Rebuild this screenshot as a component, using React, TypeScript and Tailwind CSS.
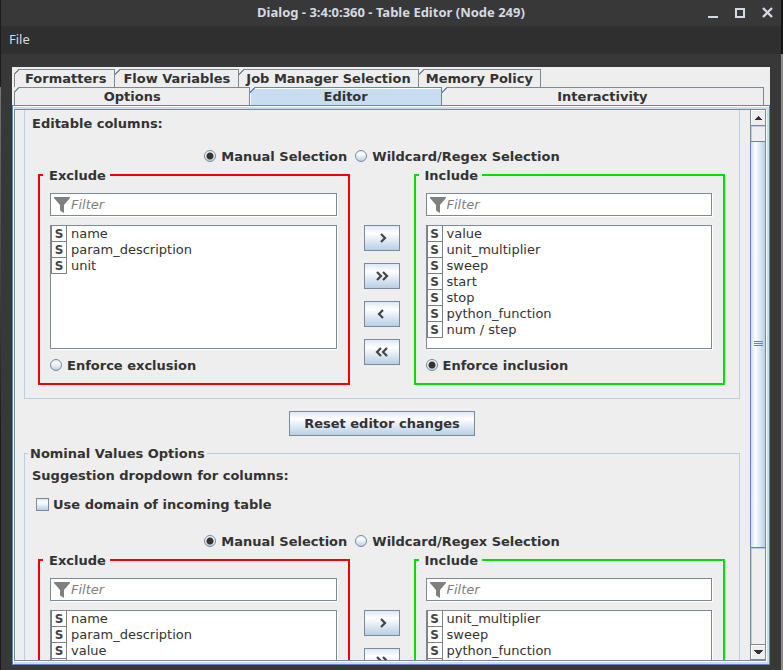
import { useRef } from 'react';
import clsx from 'clsx';

const INCLUDED = ['value', 'unit_multiplier', 'sweep', 'start', 'stop', 'python_function', 'num / step'];
const NOMINAL_INCLUDED = ['unit_multiplier', 'sweep', 'python_function', 'start'];

const BUTTON_FACE =
  'border border-[#7a8a99] bg-linear-to-b from-[#dde8f3] via-white via-30% to-[#b8cfe5]';

function TitleBar() {
  return (
    <header className="relative flex h-[26px] shrink-0 items-center justify-center bg-[#383838] text-[#d3dae3]">
      <h1 className="font-['Noto_Sans',sans-serif] text-[13px] font-bold">
        Dialog - 3:4:0:360 - Table Editor (Node 249)
      </h1>
      <div className="absolute right-2 flex gap-4">
        <button type="button" aria-label="Minimize">
          <svg width="11" height="12" shapeRendering="crispEdges">
            <path d="M0 9h10v2H0z" fill="currentColor" />
          </svg>
        </button>
        <button type="button" aria-label="Maximize">
          <svg width="11" height="12" shapeRendering="crispEdges">
            <path d="M1 2h8v8H1z" fill="none" stroke="currentColor" strokeWidth="2" />
          </svg>
        </button>
        <button type="button" aria-label="Close">
          <svg width="11" height="12">
            <path d="M1 1l9 9M10 1l-9 9" stroke="currentColor" strokeWidth="2.4" />
          </svg>
        </button>
      </div>
    </header>
  );
}

type TabProps = {
  label: string;
  className?: string;
  first?: boolean;
  selected?: boolean;
};

function Tab({ label, className, first, selected }: TabProps) {
  return (
    <button
      type="button"
      role="tab"
      aria-selected={!!selected}
      className={clsx(
        'relative h-[18px] border-t border-r text-center leading-[17px] whitespace-nowrap',
        first && 'border-l',
        selected ? 'border-[#6382bf] bg-[#c8ddf2] shadow-[inset_1px_1px_0_#fff]' : 'border-[#7a8a99]',
        className,
      )}
    >
      <svg
        className={clsx('absolute -top-px', first ? '-left-px' : 'left-0')}
        width="6"
        height="6"
        shapeRendering="crispEdges"
      >
        <path d="M0 0h6L0 6z" fill="#eee" />
        <path d="M0 5.5L5.5 0" stroke={selected ? '#6382bf' : '#7a8a99'} />
      </svg>
      {label}
    </button>
  );
}

function Tabs() {
  return (
    <div role="tablist" className="shrink-0 pt-[2px] pr-[6px] pl-[2px]">
      <div className="flex">
        <Tab label="Formatters" first className="pr-2 pl-[10px]" />
        <Tab label="Flow Variables" className="px-2" />
        <Tab label="Job Manager Selection" className="px-[7px]" />
        <Tab label="Memory Policy" className="px-[7px]" />
      </div>
      <div className="flex">
        <Tab label="Options" first className="flex-[235]" />
        <Tab label="Editor" selected className="flex-[191]" />
        <Tab label="Interactivity" className="flex-[322]" />
      </div>
    </div>
  );
}

type RadioProps = { name: string; label: string; checked?: boolean };

function Radio({ name, label, checked }: RadioProps) {
  return (
    <label className="flex h-4 items-center gap-[5px] leading-[18px]">
      <input
        type="radio"
        name={name}
        defaultChecked={checked}
        className="size-3 shrink-0 appearance-none rounded-full border border-[#7a8a99] bg-linear-to-b from-[#e4edf6] via-white via-30% to-[#b8cfe5] checked:bg-[radial-gradient(circle,#333_3px,transparent_4px),linear-gradient(#e4edf6,#fff_30%,#b8cfe5)]"
      />
      <span className="h-4">{label}</span>
    </label>
  );
}

function FilterBox({ label }: { label: string }) {
  return (
    <div className="mt-[10px] flex h-[23px] items-center border border-[#7a8a99] bg-white pl-[3px] shadow-[1px_1px_0_#fff]">
      <svg width="16" height="16" className="shrink-0">
        <path d="M0 0h16v1L10 8v8l-4-2.500V8L0 1z" fill="#808080" />
      </svg>
      <input
        type="text"
        aria-label={label}
        placeholder="Filter"
        className="min-w-0 flex-1 bg-transparent pl-px text-[13px] font-normal text-[#333] outline-none placeholder:text-[#808080] placeholder:italic"
      />
    </div>
  );
}

type ColumnBoxProps = {
  title: string;
  items: string[];
  color: string;
  radioName: string;
  enforceLabel: string;
  enforced?: boolean;
};

function ColumnBox({ title, items, color, radioName, enforceLabel, enforced }: ColumnBoxProps) {
  return (
    <fieldset className={clsx('min-w-0 flex-1 border-2 pr-[11px] pb-[10px] pl-[10px]', color)}>
      <legend className="-ml-[7px] h-4 pr-1 pl-[6px] leading-[18px]">{title}</legend>
      <FilterBox label={`${title} filter`} />
      <ul className="mt-[9px] h-[124px] overflow-hidden border border-[#7a8a99] bg-white font-normal shadow-[1px_1px_0_#fff]">
        {items.map((item) => (
          <li key={item} className="flex h-4 items-center gap-1 leading-4">
            <span className="flex size-4 items-center justify-center border-r border-b border-l border-[#808080] text-[12px] leading-4 font-bold text-[#444]">
              S
            </span>
            {item}
          </li>
        ))}
      </ul>
      <div className="mt-2">
        <Radio name={radioName} label={enforceLabel} checked={enforced} />
      </div>
    </fieldset>
  );
}

const MOVES = [
  { label: 'Add selected', d: 'M16 8l4 4-4 4' },
  { label: 'Add all', d: 'M12 8l4 4-4 4M18 8l4 4-4 4' },
  { label: 'Remove selected', d: 'M18 8l-4 4 4 4' },
  { label: 'Remove all', d: 'M16 8l-4 4 4 4M22 8l-4 4 4 4' },
];

type ColumnFilterProps = { id: string; excluded: string[]; included: string[] };

function ColumnFilter({ id, excluded, included }: ColumnFilterProps) {
  return (
    <>
      <div className="mb-[3px] flex justify-center gap-2">
        <Radio name={`${id}-mode`} label="Manual Selection" checked />
        <Radio name={`${id}-mode`} label="Wildcard/Regex Selection" />
      </div>
      <div className="flex pr-[14px] pl-[13px]">
        <ColumnBox
          title="Exclude"
          items={excluded}
          color="border-[#f00000]"
          radioName={`${id}-enforce`}
          enforceLabel="Enforce exclusion"
        />
        <div className="flex w-16 shrink-0 flex-col items-center gap-3 pt-[58px]">
          {MOVES.map((move) => (
            <button
              key={move.label}
              type="button"
              aria-label={move.label}
              className={clsx('h-[26px] w-9', BUTTON_FACE)}
            >
              <svg width="34" height="24">
                <path d={move.d} fill="none" stroke="#444" strokeWidth="2.2" />
              </svg>
            </button>
          ))}
        </div>
        <ColumnBox
          title="Include"
          items={included}
          color="border-[#00e000]"
          radioName={`${id}-enforce`}
          enforceLabel="Enforce inclusion"
          enforced
        />
      </div>
    </>
  );
}

function ScrollBar({ onScroll }: { onScroll: (delta: number) => void }) {
  return (
    <div className="flex w-4 shrink-0 flex-col border-x border-[#7a8a99]">
      <button
        type="button"
        aria-label="Scroll up"
        onClick={() => onScroll(-40)}
        className="flex h-4 items-center justify-center border-b border-[#7a8a99] shadow-[inset_1px_1px_0_#fff]"
      >
        <svg width="7" height="4" shapeRendering="crispEdges">
          <path d="M3 0h1v1h1v1h1v1h1v1H0V3h1V2h1V1h1z" fill="#333" />
        </svg>
      </button>
      <div className="flex flex-1 flex-col border-t border-l border-[#b8cfe5] pt-[14px]">
        <div className="-ml-[2px] flex flex-[407] items-center justify-center border-y border-l border-[#6382bf] bg-linear-to-r from-[#c8ddf2] via-white via-30% to-[#b8cfe5]">
          <svg width="9" height="6" shapeRendering="crispEdges">
            <path d="M0 0h9v1H0zM0 2h9v1H0zM0 4h9v1H0z" fill="#6382bf" />
          </svg>
        </div>
        <div className="flex-[96] border-t border-[#b8cfe5]" />
      </div>
      <button
        type="button"
        aria-label="Scroll down"
        onClick={() => onScroll(40)}
        className="flex h-4 items-center justify-center border-y border-[#7a8a99] shadow-[inset_1px_1px_0_#fff]"
      >
        <svg width="9" height="4" shapeRendering="crispEdges">
          <path d="M0 0h9v1H8v1H7v1H6v1H3V3H2V2H1V1H0z" fill="#333" />
        </svg>
      </button>
    </div>
  );
}

function EditorPane() {
  const viewRef = useRef<HTMLDivElement>(null);

  return (
    <div className="flex min-h-0 flex-1 border border-[#6382bf] bg-[#c8ddf2] pt-[3px] pr-[3px] pb-[3px] pl-px shadow-[inset_1px_1px_0_#fff]">
      <div className="flex min-w-0 flex-1 border border-r-0 border-[#7a8a99] bg-[#eee] shadow-[1px_1px_0_#fff]">
        <div
          ref={viewRef}
          className="min-w-0 flex-1 overflow-y-auto pr-[10px] pl-[9px] [scrollbar-width:none]"
        >
          <section className="border border-t-0 border-[#b8cfe5] pt-[6px] pb-[13px]">
            <h2 className="mb-4 h-4 pl-[7px] leading-4">Editable columns:</h2>
            <ColumnFilter
              id="editable"
              excluded={['name', 'param_description', 'unit']}
              included={INCLUDED}
            />
          </section>
          <div className="flex justify-center py-3">
            <button type="button" className={clsx('h-[25px] px-[14px]', BUTTON_FACE)}>
              Reset editor changes
            </button>
          </div>
          <fieldset className="-mt-[3px] border border-[#b8cfe5] pb-[13px]">
            <legend className="ml-[3px] h-4 px-[2px] leading-[18px]">Nominal Values Options</legend>
            <h2 className="mt-[6px] h-4 pl-[7px] leading-[18px]">Suggestion dropdown for columns:</h2>
            <label className="mt-[13px] mb-[21px] flex h-4 items-center gap-1 pl-[11px] leading-[18px]">
              <input
                type="checkbox"
                className="size-[13px] appearance-none border border-[#7a8a99] bg-linear-to-b from-[#dde8f3] via-white via-30% to-[#b8cfe5] checked:bg-[#6382bf] checked:bg-none"
              />
              <span className="h-4">Use domain of incoming table</span>
            </label>
            <ColumnFilter
              id="nominal"
              excluded={['name', 'param_description', 'value', 'unit']}
              included={NOMINAL_INCLUDED}
            />
          </fieldset>
        </div>
        <ScrollBar onScroll={(delta) => viewRef.current?.scrollBy({ top: delta })} />
      </div>
    </div>
  );
}

export default function App() {
  return (
    <div className="flex h-screen bg-[#383838]">
      <div className="w-px bg-linear-to-b from-[#1c1c1c] from-13% via-[#777] via-13% to-[#1c1c1c] to-65%" />
      <div className="flex min-w-0 flex-1 flex-col">
        <TitleBar />
        <nav className="flex h-7 shrink-0 items-center bg-[#2f2f2f] px-2">
          <button type="button" className="font-['Noto_Sans',sans-serif] text-[13px] text-[#d3dae3]">
            File
          </button>
        </nav>
        <main className="mx-[11px] mt-[13px] mb-[5px] flex min-h-0 flex-1 flex-col bg-[#eee] font-['DejaVu_Sans',sans-serif] text-[13px] font-bold text-[#333]">
          <Tabs />
          <EditorPane />
        </main>
      </div>
      <div className="w-[2px] bg-linear-to-b from-[#151515] from-8% to-[#8c8c8c] to-8%" />
    </div>
  );
}
